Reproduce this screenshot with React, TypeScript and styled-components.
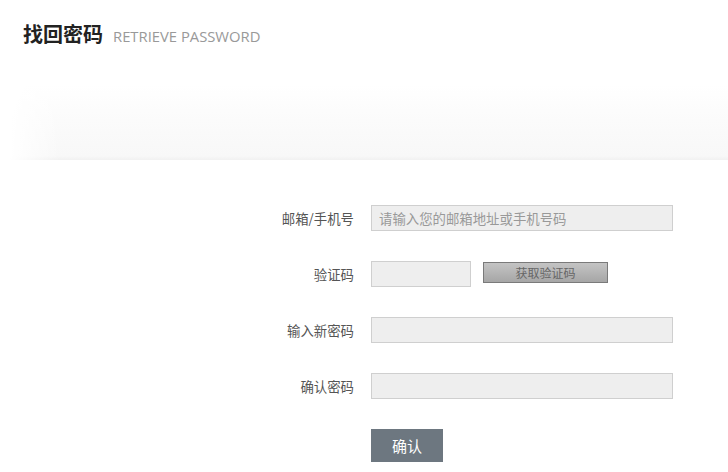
import styled, { createGlobalStyle } from 'styled-components'

const GlobalStyle = createGlobalStyle`
  html, body {
    margin: 0;
    padding: 0;
    background: #fff;
    font-family: "Open Sans", "Noto Sans CJK SC", sans-serif;
  }
`

const Page = styled.div({
  width: "728px",
  height: "472px",
  overflow: "hidden",
  background: "#fff",
})

const Header = styled.div({
  display: "flex",
  alignItems: "baseline",
  gap: "10px",
  padding: "20px 0 0 23px",
  height: "60px",
  boxSizing: "border-box",
})

const Title = styled.h1({
  margin: 0,
  fontSize: "20px",
  fontWeight: 700,
  color: "#222",
  fontFamily: "\"Noto Sans CJK SC\", sans-serif",
  lineHeight: "28px",
})

const SubTitle = styled.span({
  fontSize: "14.8px",
  color: "#999",
  fontFamily: "\"Open Sans\", sans-serif",
})

const Band = styled.div({
  position: "relative",
  height: "100px",
  marginLeft: "10px",
  borderTopLeftRadius: "60px 80px",
  background: "linear-gradient(to bottom, #ffffff 0%, #ffffff 25%, #fbfbfb 60%, #f8f8f8 96%, #f1f1f1 100%)",
  "&::after": {
    content: "''",
    position: "absolute",
    inset: 0,
    background: "linear-gradient(to right, #ffffff 0px, rgba(255,255,255,0) 50px)",
  },
})

const Form = styled.form({
  display: "flex",
  flexDirection: "column",
  gap: "30px",
  padding: "45px 0 0 254px",
})

const Row = styled.div({
  display: "flex",
  alignItems: "center",
  gap: "17px",
  height: "26px",
})

const Label = styled.label({
  width: "100px",
  textAlign: "right",
  fontSize: "13.4px",
  color: "#555",
  fontFamily: "\"Noto Sans CJK SC\", sans-serif",
})

const Input = styled.input<{ $w?: number }>(props => ({
  width: `${props.$w ?? 302}px`,
  height: "26px",
  boxSizing: "border-box",
  border: "1px solid #cfcfcf",
  background: "#eeeeee",
  padding: "0 7px",
  fontSize: "13.4px",
  color: "#333",
  fontFamily: "\"Noto Sans CJK SC\", sans-serif",
  outline: "none",
  "&::placeholder": {
    color: "#999",
  },
}))

const CodeButton = styled.button({
  marginLeft: "-5px",
  marginTop: "-4px",
  width: "125px",
  height: "21px",
  boxSizing: "border-box",
  border: "1px solid #7a7a7a",
  background: "linear-gradient(to bottom, #c4c4c4, #a6a6a6)",
  color: "#666",
  fontSize: "12px",
  fontFamily: "\"Noto Sans CJK SC\", sans-serif",
  padding: 0,
  cursor: "pointer",
})

const Submit = styled.button({
  marginLeft: "117px",
  width: "72px",
  height: "33px",
  border: "none",
  background: "#6d7780",
  color: "#fff",
  fontSize: "15px",
  fontFamily: "\"Noto Sans CJK SC\", sans-serif",
  cursor: "pointer",
  alignSelf: "flex-start",
})

const App = () => {
  return (
    <Page>
      <GlobalStyle />
      <Header>
        <Title>找回密码</Title>
        <SubTitle>RETRIEVE PASSWORD</SubTitle>
      </Header>
      <Band />
      <Form onSubmit={e => e.preventDefault()}>
        <Row>
          <Label>邮箱/手机号</Label>
          <Input placeholder="请输入您的邮箱地址或手机号码" />
        </Row>
        <Row>
          <Label>验证码</Label>
          <Input $w={100} />
          <CodeButton type="button">获取验证码</CodeButton>
        </Row>
        <Row>
          <Label>输入新密码</Label>
          <Input type="password" />
        </Row>
        <Row>
          <Label>确认密码</Label>
          <Input type="password" />
        </Row>
        <Submit type="submit">确认</Submit>
      </Form>
    </Page>
  )
}

export default App
